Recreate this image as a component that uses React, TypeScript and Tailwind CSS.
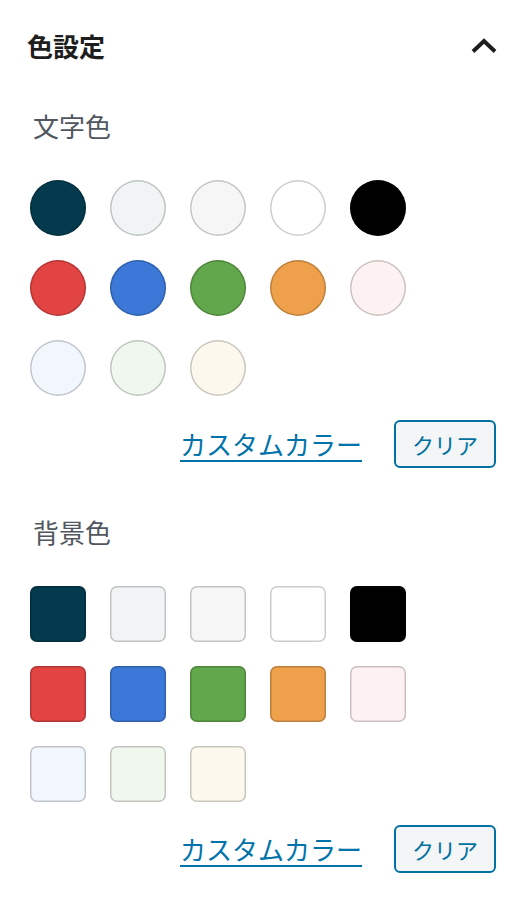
import React from "react";

const textColors = [
  ["#043a4e", "#f0f4f5", "#f6f6f6", "#ffffff", "#000000"],
  ["#e24343", "#3c78d7", "#63a74c", "#eea04b", "#fdf2f1"],
  ["#f2f7fe", "#f0f7ee", "#fcf8ee"],
];

function Swatches({ round }: { round: boolean }) {
  return (
    <div className="flex flex-col gap-[24px]">
      {textColors.map((row, i) => (
        <div key={i} className="flex gap-[24px]">
          {row.map((c, j) => (
            <button
              key={j}
              className={`w-[56px] h-[56px] shrink-0 shadow-[inset_0_0_0_1.5px_rgba(0,0,0,0.2)] ${
                round ? "rounded-full" : "rounded-[7px]"
              }`}
              style={{ backgroundColor: c }}
            />
          ))}
        </div>
      ))}
    </div>
  );
}

function Actions() {
  return (
    <div className="flex items-center justify-end gap-[32px] pr-[28px]">
      <a className="text-[26px] leading-[36px] text-[#0073aa] underline decoration-[2px] underline-offset-[5px] cursor-pointer">
        カスタムカラー
      </a>
      <button className="h-[48px] w-[102px] rounded-[6px] border-2 border-[#0071a1] bg-[#f3f5f6] text-[22px] text-[#0071a1] flex items-center justify-center">
        クリア
      </button>
    </div>
  );
}

export default function App() {
  return (
    <div
      className="w-[524px] min-h-[916px] bg-white text-[#1e1e1e]"
      style={{ fontFamily: '"Noto Sans CJK JP", "Noto Sans", sans-serif' }}
    >
      <div className="h-[92px] flex items-center justify-between pl-[27px] pr-[28px]">
        <h2 className="text-[26px] font-bold leading-[36px] text-[#1e1e1e]">色設定</h2>
        <svg width="26" height="16" viewBox="0 0 26 16" className="mr-[-1px]">
          <polyline points="2,13.5 13,3 24,13.5" fill="none" stroke="#1e1e1e" strokeWidth="4" />
        </svg>
      </div>

      <div className="pl-[30px]">
        <div className="mt-[16px] pl-[3px] text-[26px] leading-[36px] text-[#50575e]">文字色</div>
        <div className="mt-[36px]">
          <Swatches round />
        </div>
      </div>
      <div className="mt-[24px]">
        <Actions />
      </div>

      <div className="pl-[30px]">
        <div className="mt-[46px] pl-[3px] text-[26px] leading-[36px] text-[#50575e]">背景色</div>
        <div className="mt-[36px]">
          <Swatches round={false} />
        </div>
      </div>
      <div className="mt-[23px]">
        <Actions />
      </div>
    </div>
  );
}
